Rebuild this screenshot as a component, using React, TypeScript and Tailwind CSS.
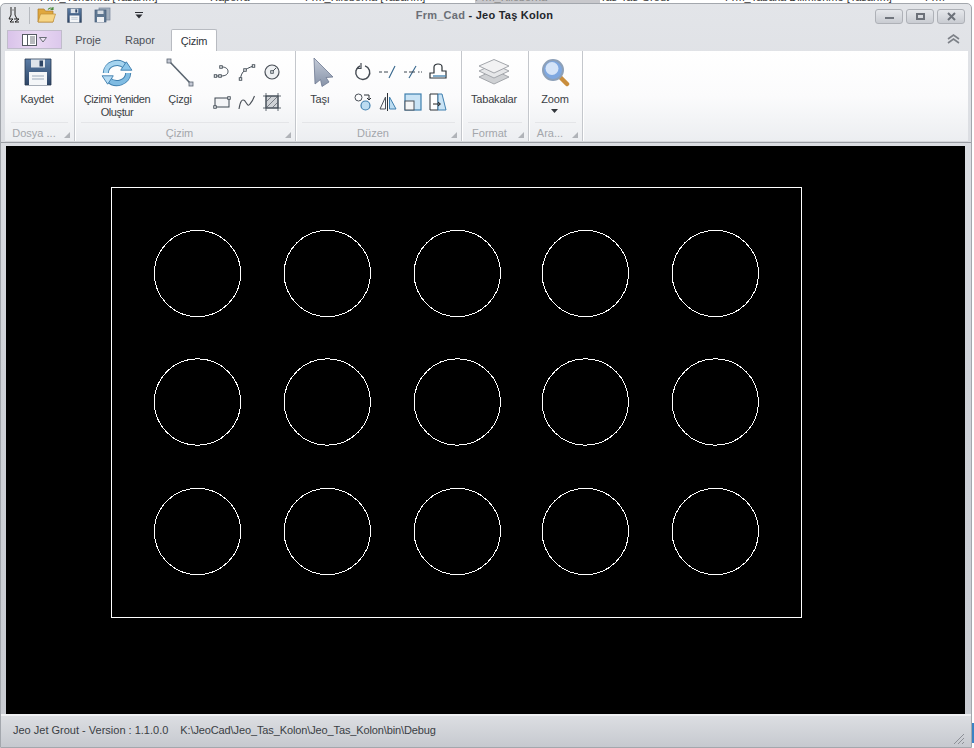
import type { ReactNode } from 'react';

const cols = [191.5, 321.3, 451.3, 579.3, 709.3];
const rows = [127.5, 256, 385.5];

function Small({ children, w = 18 }: { children: ReactNode; w?: number }) {
  return (
    <svg width={w} height={18} viewBox="0 0 18 18" fill="none" className="block">
      {children}
    </svg>
  );
}

function Pt({ x, y, s = 2.5, c = '#3c4650' }: { x: number; y: number; s?: number; c?: string }) {
  return <rect x={x - s / 2} y={y - s / 2} width={s} height={s} fill="#fff" stroke={c} strokeWidth="0.9" />;
}

function Group({ width, caption, children }: { width: string; caption: string; children: ReactNode }) {
  return (
    <div className={`${width} h-full flex flex-col border-r border-[#c4c7cc] shadow-[1px_0_0_#ffffff]`}>
      <div className="h-[72px] flex">{children}</div>
      <div className="mx-[6px] h-[19px] border-t border-[#e4e5e8] flex items-center justify-center relative text-[#a3a6ab] pr-[11px] pt-[2px]">
        <span className="leading-none whitespace-nowrap">{caption}</span>
        <svg width="6" height="6" viewBox="0 0 6 6" className="absolute right-[-2px] bottom-[3px]">
          <path d="M6 0V6H0Z" fill="#b0b3b8" />
        </svg>
      </div>
    </div>
  );
}

function Big({ width, icon, label }: { width: string; icon: ReactNode; label: ReactNode }) {
  return (
    <div className={`${width} flex flex-col items-center pt-[5px] text-[#3b3f45] text-center leading-[13px] tracking-[-0.2px]`}>
      <div className="h-[36px] flex items-start justify-center">{icon}</div>
      <div className="mt-[1px]">{label}</div>
    </div>
  );
}

function Disk({ size, dark = '#2e4566', light = '#5b7da6' }: { size: number; dark?: string; light?: string }) {
  return (
    <svg width={size} height={size} viewBox="0 0 28 28" className="block">
      <defs>
        <linearGradient id="dk" x1="0" y1="0" x2="0" y2="1">
          <stop offset="0" stopColor={light} />
          <stop offset="1" stopColor={dark} />
        </linearGradient>
      </defs>
      <path d="M1 1H27V27H1Z" fill="url(#dk)" stroke="#26374f" strokeWidth="0.8" />
      <rect x="7" y="1.5" width="14" height="8" fill="#dfe4ea" />
      <rect x="15.5" y="2.5" width="3.5" height="6" fill="#2e4566" />
      <rect x="5" y="14" width="18" height="13" fill="#f4f6f8" />
      <path d="M8 18H20M8 21H20" stroke="#9aa9bb" strokeWidth="1" />
    </svg>
  );
}

export default function App() {
  return (
    <div className="w-[974px] h-[748px] overflow-hidden bg-white text-[11px] font-['Liberation_Sans',sans-serif]">
      {/* windows behind, only their lowest pixels show */}
      <div className="h-[3px] overflow-hidden flex items-end text-[#333] leading-[12px] whitespace-nowrap">
        <span className="ml-[40px] w-[170px]">Frm_Yerlemra [Tasarım]</span>
        <span className="w-[95px]">Raporra</span>
        <span className="w-[170px]">Frm_Kiloborna [Tasarım]</span>
        <span className="w-[125px] bg-[#c8c8cc] text-[#888]">Frm_Kiloborna</span>
        <span className="w-[125px]">Tas-Tas-Grout</span>
        <span className="w-[200px]">Frm_Tabaka Dilimlenme [Tasarım]</span>
        <span>Frm</span>
      </div>

      <div className="flex">
        <div className="w-[972px] h-[745px] border border-[#a3a7ad] rounded-t-[5px] bg-gradient-to-b from-[#e3e5e9] via-[#cfd2d8] to-[#c8cbd1] flex flex-col">
          {/* title bar */}
          <div className="h-[22px] grid grid-cols-[1fr_auto_1fr] items-center">
            <div className="flex items-center pl-[5px]">
              <svg width="16" height="18" viewBox="0 0 16 18" fill="none" stroke="#222" strokeWidth="1">
                <path d="M5 1V9L3 13M9 1V9L11 13M3 13H7L4 16H8M8 13H13L9 16H13" />
                <path d="M5 4H9" stroke="#888" />
              </svg>
              <div className="w-px h-[17px] bg-[#b6b9bf] ml-[7px] mr-[7px]" />
              <svg width="19" height="18" viewBox="0 0 19 18">
                <path d="M1 3H7L8.5 5H16V16H1Z" fill="#e0a83e" stroke="#a9792a" strokeWidth="0.7" />
                <path d="M1 16L3.5 8H18.5L16 16Z" fill="#f6d585" stroke="#bd8c35" strokeWidth="0.7" />
                <path d="M11 3.5C12.5 1.5 14.5 1.5 16 3M16 1V3.5H13.5" fill="none" stroke="#4c8a3a" strokeWidth="1.1" />
              </svg>
              <div className="ml-[11px]">
                <Disk size={15} />
              </div>
              <svg width="17" height="16" viewBox="0 0 17 16" className="ml-[12px]">
                <rect x="5" y="1" width="11" height="12" fill="#a3afbd" stroke="#75849a" strokeWidth="0.7" />
                <rect x="1" y="3" width="11" height="12" fill="#5f7791" stroke="#465c78" strokeWidth="0.7" />
                <rect x="3.5" y="3.5" width="6" height="3.5" fill="#d7dde4" />
                <rect x="3" y="10" width="7" height="5" fill="#eef0f3" />
              </svg>
              <svg width="8" height="7" viewBox="0 0 8 7" className="ml-[24px]">
                <path d="M0 0H8V1H0ZM0.5 2.5H7.5L4 6.5Z" fill="#2b2e33" />
              </svg>
            </div>
            <div className="font-bold text-[#23262b] whitespace-nowrap tracking-[0.25px] pr-[3px]">
              <span className="text-[#6b6f76]">Frm_Cad</span> - Jeo Taş Kolon
            </div>
            <div className="flex justify-end gap-[3px] pr-[6px] pt-[2px]">
              {['min', 'max', 'close'].map((k) => (
                <div
                  key={k}
                  className="w-[28px] h-[15px] rounded-[3px] border border-[#aeb1b7] bg-gradient-to-b from-[#e6e8ec] to-[#c9ccd2] flex items-center justify-center"
                >
                  {k === 'min' && <div className="w-[9px] h-[2px] bg-[#70757d] mt-[4px]" />}
                  {k === 'max' && <div className="w-[9px] h-[7px] border-2 border-[#6c7179]" />}
                  {k === 'close' && (
                    <svg width="9" height="9" viewBox="0 0 9 9">
                      <path d="M1 1L8 8M8 1L1 8" stroke="#6c7179" strokeWidth="2" />
                    </svg>
                  )}
                </div>
              ))}
            </div>
          </div>

          {/* tabs */}
          <div className="h-[25px] flex items-end pl-[6px] pr-[11px] text-[#4c5057]">
            <div className="w-[55px] h-[19px] mb-[2px] border border-[#c0bccb] bg-gradient-to-r from-[#d9c3ea] via-[#ead9f3] to-[#dcc8ec] flex items-center justify-center gap-[2px]">
              <svg width="15" height="12" viewBox="0 0 15 12" fill="none">
                <rect x="0.5" y="0.5" width="14" height="11" fill="#fff" stroke="#555a62" />
                <path d="M5.5 0.5V11.5" stroke="#555a62" />
                <path d="M8 3H13M8 5H13M8 7H13M8 9H13" stroke="#70757d" />
              </svg>
              <svg width="8" height="6" viewBox="0 0 8 6" fill="none">
                <path d="M0.5 0.5H7.5L4 5Z" stroke="#6a6f77" fill="#f0e6f6" />
              </svg>
            </div>
            <div className="w-[50px] h-[23px] flex items-center justify-center ml-[1px] pt-[1px]">Proje</div>
            <div className="w-[54px] h-[23px] flex items-center justify-center pt-[1px]">Rapor</div>
            <div className="w-[46px] h-[22px] bg-white rounded-t-[2px] border border-b-0 border-[#b8bbc1] flex items-center justify-center text-[#30343a] ml-[4px] pt-[2px] tracking-[-0.2px]">
              Çizim
            </div>
            <div className="flex-1 h-full flex items-center justify-end">
              <svg width="13" height="10" viewBox="0 0 13 10" fill="none" stroke="#7d8188" strokeWidth="1.6">
                <path d="M1 5L6.5 1L12 5M1 9L6.5 5L12 9" />
              </svg>
            </div>
          </div>

          {/* ribbon */}
          <div className="w-[963px] h-[91px] ml-[4px] flex border-b border-[#d6d8dc] bg-gradient-to-b from-white via-[#fbfbfc] to-[#eceef1]">
            <Group width="w-[70px]" caption="Dosya ...">
              <Big
                width="w-[64px]"
                icon={
                  <div className="mt-[2px] ml-[2px]">
                    <Disk size={28} />
                  </div>
                }
                label="Kaydet"
              />
            </Group>

            <Group width="w-[221px]" caption="Çizim">
              <Big
                width="w-[84px]"
                icon={
                  <svg width="32" height="28" viewBox="0 0 34 30" fill="none" className="mt-[3px]">
                    <path d="M5 15A12 11 0 0 1 26 8" stroke="#3f7fae" strokeWidth="6.5" />
                    <path d="M5 15A12 11 0 0 1 26 8" stroke="#a6d4ef" strokeWidth="4.5" />
                    <path d="M29 15A12 11 0 0 1 8 22" stroke="#3f7fae" strokeWidth="6.5" />
                    <path d="M29 15A12 11 0 0 1 8 22" stroke="#7fbbe2" strokeWidth="4.5" />
                    <path d="M21 12H33L27 3Z" fill="#8cc6ea" stroke="#3f7fae" />
                    <path d="M1 18H13L7 27Z" fill="#b6dcf4" stroke="#3f7fae" />
                  </svg>
                }
                label={
                  <span className="tracking-[-0.4px]">
                    Çizimi Yeniden
                    <br />
                    Oluştur
                  </span>
                }
              />
              <Big
                width="w-[42px]"
                icon={
                  <svg width="28" height="30" viewBox="0 0 28 30" fill="none" className="mt-[2px]">
                    <path d="M3 3L25 26" stroke="#59646f" strokeWidth="1.6" />
                    <rect x="1" y="1" width="4" height="4" fill="#c4c8d4" stroke="#5a6470" strokeWidth="0.8" />
                    <rect x="23" y="24" width="4" height="4" fill="#c4c8d4" stroke="#5a6470" strokeWidth="0.8" />
                  </svg>
                }
                label="Çizgi"
              />
              <div className="grid grid-cols-[repeat(3,25px)] grid-rows-[30px_30px] pl-[8px] pt-[6px] justify-items-center items-center">
                <Small>
                  <path d="M4 13H8C13 13 15 11 15 8.500C15 6 13 4 9 4" stroke="#3c4650" strokeWidth="1" />
                  <Pt x={2.500} y={13} />
                  <Pt x={7} y={13} />
                  <Pt x={8} y={4} />
                </Small>
                <Small>
                  <path d="M2.500 16C3 10 6 6 15.500 3" stroke="#3c4650" strokeWidth="1" />
                  <Pt x={2.500} y={16} />
                  <Pt x={7} y={7} />
                  <Pt x={15.500} y={3} />
                </Small>
                <Small>
                  <circle cx="9" cy="9" r="7" fill="#eef0f2" stroke="#4a5058" strokeWidth="1.2" />
                  <path d="M9 9L13 5" stroke="#4a5058" />
                  <Pt x={9} y={9} />
                </Small>
                <Small>
                  <rect x="2" y="5" width="14" height="9" fill="#f4f5f7" stroke="#3c4650" />
                  <Pt x={2} y={14} />
                  <Pt x={16} y={5} />
                </Small>
                <Small>
                  <path d="M1 16C2 9 4 5 7 8C9 11 10 14 12 11C14 9 15 7 16.500 3" stroke="#4a5058" strokeWidth="1.1" />
                </Small>
                <Small>
                  <rect x="3" y="3" width="12" height="12" fill="#cfd2d6" stroke="#3c4650" />
                  <path d="M3 9L9 3M3 15L15 3M9 15L15 9" stroke="#777c84" />
                  <path d="M3 0V18M15 0V18M0 3H18M0 15H18" stroke="#3c4650" strokeWidth="0.8" />
                </Small>
              </div>
            </Group>

            <Group width="w-[166px]" caption="Düzen">
              <Big
                width="w-[48px]"
                icon={
                  <svg width="21" height="31" viewBox="0 0 21 31" className="mt-[1px] ml-[6px]">
                    <defs>
                      <linearGradient id="ar" x1="0" y1="0" x2="0" y2="1">
                        <stop offset="0" stopColor="#c4cbd8" />
                        <stop offset="1" stopColor="#8793a8" />
                      </linearGradient>
                    </defs>
                    <path d="M1 1L20 20L13 20.500L16 25L9 29.500L7.500 22.500L2 27Z" fill="url(#ar)" stroke="#6d7890" strokeWidth="0.8" />
                  </svg>
                }
                label="Taşı"
              />
              <div className="grid grid-cols-[repeat(4,25px)] grid-rows-[30px_30px] pl-[6px] pt-[6px] justify-items-center items-center">
                <Small>
                  <path d="M6 3A7 7 0 1 0 11 2.800" stroke="#444a52" strokeWidth="1.4" />
                  <path d="M7 0V5.500H2.500" stroke="#444a52" strokeWidth="1.2" />
                </Small>
                <Small>
                  <path d="M0 9H3M5 9H9" stroke="#3c4650" />
                  <path d="M10 15L16 3" stroke="#35658c" strokeWidth="1.1" />
                </Small>
                <Small>
                  <path d="M0 9H3M14 9H15.500M17 9H18" stroke="#3c4650" />
                  <path d="M5 15L12 3" stroke="#35658c" strokeWidth="1.1" />
                  <path d="M5 9H11" stroke="#3c4650" />
                </Small>
                <Small>
                  <path d="M1 15V10H5V4C5 2 7 1 9 1C11 1 13 2 13 4V8H17V15Z" fill="#fff" stroke="#2c3238" strokeWidth="1.2" />
                  <path d="M4 13H17" stroke="#4a86b0" strokeWidth="1.4" />
                </Small>
                <Small>
                  <circle cx="4.500" cy="4.500" r="3.500" stroke="#4a5058" />
                  <circle cx="11.500" cy="12.500" r="4.500" fill="#bcdcf1" stroke="#3f7fae" strokeWidth="1.2" />
                  <path d="M10 2H15V7M13 5L15 7L17 5" stroke="#2c3238" />
                </Small>
                <Small>
                  <path d="M8.500 0V18" stroke="#2c3238" />
                  <path d="M6.500 4V16H1Z" stroke="#4a5058" />
                  <path d="M10.500 4V16H17Z" fill="#bcdcf1" stroke="#3f7fae" />
                </Small>
                <Small>
                  <rect x="1" y="1" width="16" height="16" fill="#c9e3f5" stroke="#3f7fae" strokeWidth="1.2" />
                  <rect x="1" y="8" width="9" height="9" fill="#f5f5f5" stroke="#4a5058" />
                </Small>
                <Small>
                  <path d="M1 1H9V17H1Z" fill="#fff" stroke="#2c3238" />
                  <path d="M9 1H13L17 17H9Z" fill="#c9e3f5" stroke="#3f7fae" />
                  <path d="M4 11H11M9 9L11.500 11L9 13" stroke="#222" />
                </Small>
              </div>
            </Group>

            <Group width="w-[67px]" caption="Format">
              <Big
                width="w-[64px]"
                icon={
                  <svg width="32" height="26" viewBox="0 0 32 26" className="mt-[3px]">
                    <path d="M1 18L16 11L31 18L16 25Z" fill="#cfd1d4" stroke="#a3a6ab" />
                    <path d="M1 12L16 5L31 12L16 19Z" fill="#e6e7e9" stroke="#a3a6ab" />
                    <path d="M1 7L16 0.500L31 7L16 14Z" fill="#f2f2f3" stroke="#a3a6ab" />
                  </svg>
                }
                label="Tabakalar"
              />
            </Group>

            <Group width="w-[54px]" caption="Ara...">
              <Big
                width="w-[52px]"
                icon={
                  <svg width="29" height="29" viewBox="0 0 29 29" fill="none" className="mt-[2px]">
                    <path d="M18 18L26 26" stroke="#c98d3c" strokeWidth="4.5" strokeLinecap="round" />
                    <circle cx="12" cy="12" r="10" fill="#7fa8e0" stroke="#8da0b8" strokeWidth="2" />
                    <circle cx="11" cy="10.500" r="6.500" fill="#d5e4f8" />
                  </svg>
                }
                label={
                  <span className="flex flex-col items-center">
                    Zoom
                    <svg width="7" height="4" viewBox="0 0 7 4" className="mt-[3px]">
                      <path d="M0 0H7L3.500 4Z" fill="#33373c" />
                    </svg>
                  </span>
                }
              />
            </Group>
          </div>

          <div className="h-[4px] border-t border-[#9a9da3]" />

          {/* drawing area */}
          <div className="w-[959px] h-[568px] ml-[5px] bg-black">
            <svg width="959" height="568" className="block" shapeRendering="crispEdges">
              <rect x="105.500" y="41.500" width="690" height="430" fill="none" stroke="#fff" />
              {rows.map((y) =>
                cols.map((x) => <circle key={`${x}-${y}`} cx={x} cy={y} r="43.2" fill="none" stroke="#fff" />),
              )}
            </svg>
          </div>

          {/* status bar */}
          <div className="flex-1 border-t-2 border-[#f0f1f3] bg-gradient-to-b from-[#dcdee2] to-[#c6c9cf] flex items-center pl-[12px] pr-[6px] pb-[2px] text-[#3a3e44]">
            <span className="whitespace-nowrap">Jeo Jet Grout - Version : 1.1.0.0</span>
            <span className="whitespace-nowrap ml-[12px] tracking-[-0.12px]">K:\JeoCad\Jeo_Tas_Kolon\Jeo_Tas_Kolon\bin\Debug</span>
            <svg width="12" height="12" viewBox="0 0 12 12" fill="none" stroke="#8d9097" className="ml-auto self-end">
              <path d="M1 11L11 1M5 11L11 5M9 11L11 9" />
            </svg>
          </div>
        </div>
        <div className="flex-1 flex flex-col">
          <div className="h-[720px]" />
          <div className="h-[20px] bg-[#3b83c4]" />
        </div>
      </div>
    </div>
  );
}
